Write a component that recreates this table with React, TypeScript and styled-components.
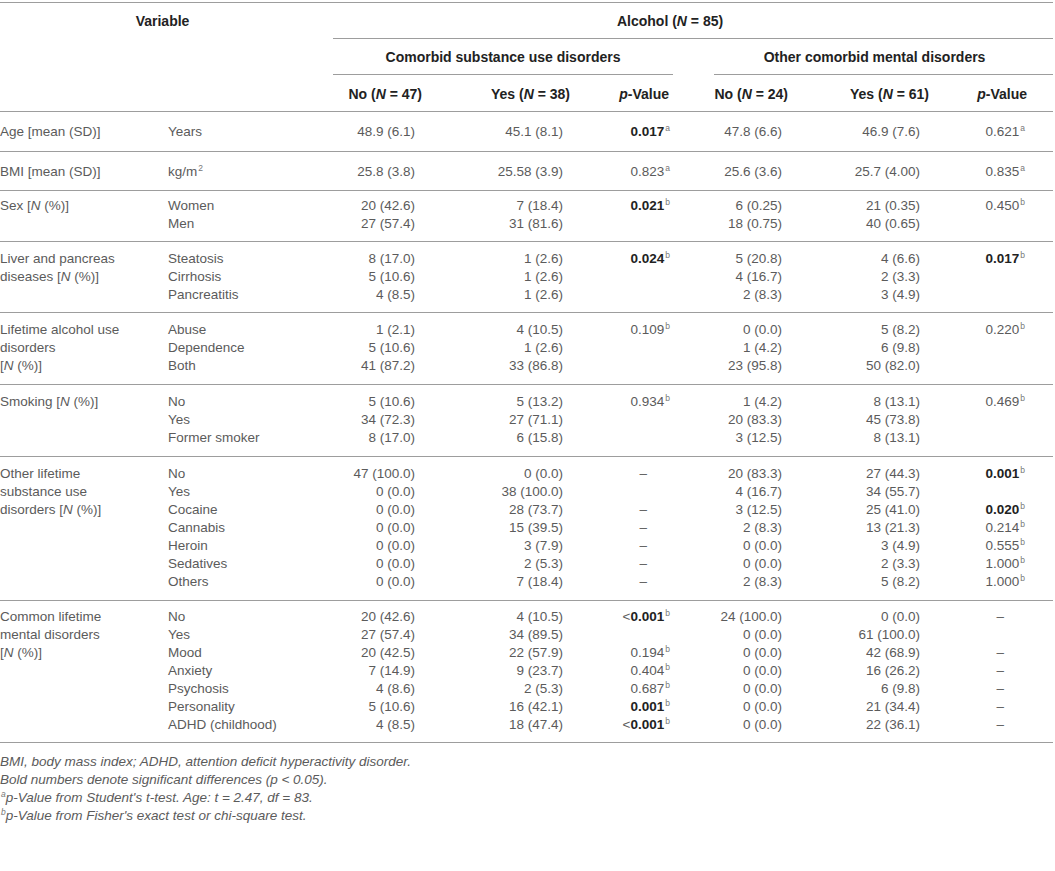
import React from "react";
import styled, { createGlobalStyle } from "styled-components";

const Global = createGlobalStyle`
  html, body { margin: 0; padding: 0; background: #fff; }
  body { font-family: "Liberation Sans", Arial, sans-serif; }
`;

const Page = styled.div`
  width: 1055px;
  padding-top: 2px;
`;

const Table = styled.table`
  width: 1053px;
  table-layout: fixed;
  border-collapse: collapse;
  border-top: 1px solid #9d9d9d;
  font-size: 13.5px;
  color: #5b5b5b;
`;

const Head = styled.th<{ $pr?: number; $pt?: number; $pb?: number; $align?: string }>`
  font-weight: bold;
  color: #222;
  font-size: 14px;
  line-height: 18px;
  text-align: ${(p) => p.$align ?? "right"};
  vertical-align: top;
  padding: ${(p) => p.$pt ?? 9}px ${(p) => p.$pr ?? 0}px ${(p) => p.$pb ?? 8}px 0;
  white-space: nowrap;
`;

const AlcoholHead = styled(Head)`
  border-bottom: 1px solid #9d9d9d;
`;

const ColHead = styled(Head)`
  border-bottom: 1px solid #9d9d9d;
`;

const GroupCell = styled.th`
  padding: 0;
  vertical-align: bottom;
`;

const GroupTitle = styled.div<{ $ml?: number; $pr?: number }>`
  margin-left: ${(p) => p.$ml ?? 0}px;
  padding: 9px ${(p) => p.$pr ?? 0}px 8px 0;
  border-bottom: 1px solid #9d9d9d;
  font-weight: bold;
  color: #222;
  font-size: 14px;
  line-height: 18px;
  text-align: center;
  white-space: nowrap;
`;

const Row = styled.tr`
  border-bottom: 1px solid #9d9d9d;
`;

const Cell = styled.td<{ $pr?: number; $pt: number; $pb: number; $align?: string }>`
  vertical-align: top;
  padding: ${(p) => p.$pt}px ${(p) => p.$pr ?? 0}px ${(p) => p.$pb}px 0;
  text-align: ${(p) => p.$align ?? "right"};
  white-space: nowrap;
`;

const Line = styled.div<{ $extra?: number }>`
  height: 18px;
  line-height: 18px;
  padding-right: ${(p) => p.$extra ?? 0}px;
`;

const Strong = styled.span`
  font-weight: bold;
  color: #222;
`;

const Sup = styled.span`
  position: relative;
  top: -5px;
  font-size: 8.5px;
  line-height: 0;
  margin-left: 1px;
  color: #777;
`;

const Note = styled.div`
  font-style: italic;
  font-size: 13.5px;
  line-height: 18px;
  color: #5b5b5b;
`;

const Notes = styled.div`
  padding-top: 10px;
`;

type P = { v: string; s: string; b?: boolean; lt?: boolean };
type V = string | P;

const p = (v: string, s: string, b = false, lt = false): P => ({ v, s, b, lt });

const N = () => <i>N</i>;
const NPct = () => (
  <>
    [<i>N</i> (%)]
  </>
);

type Group = {
  label: React.ReactNode[];
  sub: React.ReactNode[];
  c3: V[];
  c4: V[];
  c5: V[];
  c6: V[];
  c7: V[];
  c8: V[];
  pt: number;
  pb: number;
};

const groups: Group[] = [
  {
    label: ["Age [mean (SD)]"],
    sub: ["Years"],
    c3: ["48.9 (6.1)"],
    c4: ["45.1 (8.1)"],
    c5: [p("0.017", "a", true)],
    c6: ["47.8 (6.6)"],
    c7: ["46.9 (7.6)"],
    c8: [p("0.621", "a")],
    pt: 11,
    pb: 10,
  },
  {
    label: ["BMI [mean (SD)]"],
    sub: [
      <>
        kg/m<Sup>2</Sup>
      </>,
    ],
    c3: ["25.8 (3.8)"],
    c4: ["25.58 (3.9)"],
    c5: [p("0.823", "a")],
    c6: ["25.6 (3.6)"],
    c7: ["25.7 (4.00)"],
    c8: [p("0.835", "a")],
    pt: 11,
    pb: 9,
  },
  {
    label: [
      <>
        Sex <NPct />
      </>,
    ],
    sub: ["Women", "Men"],
    c3: ["20 (42.6)", "27 (57.4)"],
    c4: ["7 (18.4)", "31 (81.6)"],
    c5: [p("0.021", "b", true)],
    c6: ["6 (0.25)", "18 (0.75)"],
    c7: ["21 (0.35)", "40 (0.65)"],
    c8: [p("0.450", "b")],
    pt: 6,
    pb: 8,
  },
  {
    label: [
      "Liver and pancreas",
      <>
        diseases <NPct />
      </>,
    ],
    sub: ["Steatosis", "Cirrhosis", "Pancreatitis"],
    c3: ["8 (17.0)", "5 (10.6)", "4 (8.5)"],
    c4: ["1 (2.6)", "1 (2.6)", "1 (2.6)"],
    c5: [p("0.024", "b", true)],
    c6: ["5 (20.8)", "4 (16.7)", "2 (8.3)"],
    c7: ["4 (6.6)", "2 (3.3)", "3 (4.9)"],
    c8: [p("0.017", "b", true)],
    pt: 8,
    pb: 8,
  },
  {
    label: ["Lifetime alcohol use", "disorders", <NPct />],
    sub: ["Abuse", "Dependence", "Both"],
    c3: ["1 (2.1)", "5 (10.6)", "41 (87.2)"],
    c4: ["4 (10.5)", "1 (2.6)", "33 (86.8)"],
    c5: [p("0.109", "b")],
    c6: ["0 (0.0)", "1 (4.2)", "23 (95.8)"],
    c7: ["5 (8.2)", "6 (9.8)", "50 (82.0)"],
    c8: [p("0.220", "b")],
    pt: 8,
    pb: 9,
  },
  {
    label: [
      <>
        Smoking <NPct />
      </>,
    ],
    sub: ["No", "Yes", "Former smoker"],
    c3: ["5 (10.6)", "34 (72.3)", "8 (17.0)"],
    c4: ["5 (13.2)", "27 (71.1)", "6 (15.8)"],
    c5: [p("0.934", "b")],
    c6: ["1 (4.2)", "20 (83.3)", "3 (12.5)"],
    c7: ["8 (13.1)", "45 (73.8)", "8 (13.1)"],
    c8: [p("0.469", "b")],
    pt: 8,
    pb: 9,
  },
  {
    label: [
      "Other lifetime",
      "substance use",
      <>
        disorders <NPct />
      </>,
    ],
    sub: ["No", "Yes", "Cocaine", "Cannabis", "Heroin", "Sedatives", "Others"],
    c3: ["47 (100.0)", "0 (0.0)", "0 (0.0)", "0 (0.0)", "0 (0.0)", "0 (0.0)", "0 (0.0)"],
    c4: ["0 (0.0)", "38 (100.0)", "28 (73.7)", "15 (39.5)", "3 (7.9)", "2 (5.3)", "7 (18.4)"],
    c5: ["–", "", "–", "–", "–", "–", "–"],
    c6: ["20 (83.3)", "4 (16.7)", "3 (12.5)", "2 (8.3)", "0 (0.0)", "0 (0.0)", "2 (8.3)"],
    c7: ["27 (44.3)", "34 (55.7)", "25 (41.0)", "13 (21.3)", "3 (4.9)", "2 (3.3)", "5 (8.2)"],
    c8: [
      p("0.001", "b", true),
      "",
      p("0.020", "b", true),
      p("0.214", "b"),
      p("0.555", "b"),
      p("1.000", "b"),
      p("1.000", "b"),
    ],
    pt: 8,
    pb: 9,
  },
  {
    label: ["Common lifetime", "mental disorders", <NPct />],
    sub: ["No", "Yes", "Mood", "Anxiety", "Psychosis", "Personality", "ADHD (childhood)"],
    c3: ["20 (42.6)", "27 (57.4)", "20 (42.5)", "7 (14.9)", "4 (8.6)", "5 (10.6)", "4 (8.5)"],
    c4: ["4 (10.5)", "34 (89.5)", "22 (57.9)", "9 (23.7)", "2 (5.3)", "16 (42.1)", "18 (47.4)"],
    c5: [
      p("0.001", "b", true, true),
      "",
      p("0.194", "b"),
      p("0.404", "b"),
      p("0.687", "b"),
      p("0.001", "b", true),
      p("0.001", "b", true, true),
    ],
    c6: ["24 (100.0)", "0 (0.0)", "0 (0.0)", "0 (0.0)", "0 (0.0)", "0 (0.0)", "0 (0.0)"],
    c7: ["0 (0.0)", "61 (100.0)", "42 (68.9)", "16 (26.2)", "6 (9.8)", "21 (34.4)", "22 (36.1)"],
    c8: ["–", "", "–", "–", "–", "–", "–"],
    pt: 7,
    pb: 8,
  },
];

const cols: { key: "c3" | "c4" | "c5" | "c6" | "c7" | "c8"; pr: number; dash: number }[] = [
  { key: "c3", pr: 8, dash: 0 },
  { key: "c4", pr: 9, dash: 0 },
  { key: "c5", pr: 3, dash: 23 },
  { key: "c6", pr: 8, dash: 0 },
  { key: "c7", pr: 11, dash: 0 },
  { key: "c8", pr: 28, dash: 21 },
];

const renderValue = (v: V) => {
  if (typeof v === "string") return v === "" ? "\u00a0" : v;
  const num = v.b ? <Strong>{v.v}</Strong> : v.v;
  return (
    <>
      {v.lt ? "<" : null}
      {num}
      <Sup>{v.s}</Sup>
    </>
  );
};

export default function App() {
  return (
    <Page>
      <Global />
      <Table>
        <colgroup>
          <col style={{ width: 168 }} />
          <col style={{ width: 165 }} />
          <col style={{ width: 90 }} />
          <col style={{ width: 149 }} />
          <col style={{ width: 101 }} />
          <col style={{ width: 117 }} />
          <col style={{ width: 141 }} />
          <col style={{ width: 122 }} />
        </colgroup>
        <thead>
          <tr>
            <ColHead colSpan={2} rowSpan={3} $align="center" $pr={8}>
              Variable
            </ColHead>
            <AlcoholHead colSpan={6} $align="center" $pr={46}>
              Alcohol (<N /> = 85)
            </AlcoholHead>
          </tr>
          <tr>
            <GroupCell colSpan={3}>
              <GroupTitle $pr={0}>Comorbid substance use disorders</GroupTitle>
            </GroupCell>
            <GroupCell colSpan={3}>
              <GroupTitle $ml={41} $pr={18}>
                Other comorbid mental disorders
              </GroupTitle>
            </GroupCell>
          </tr>
          <tr>
            <ColHead $pt={10} $pr={1}>
              No (<N /> = 47)
            </ColHead>
            <ColHead $pt={10} $pr={2}>
              Yes (<N /> = 38)
            </ColHead>
            <ColHead $pt={10} $pr={4}>
              <i>p</i>-Value
            </ColHead>
            <ColHead $pt={10} $pr={2}>
              No (<N /> = 24)
            </ColHead>
            <ColHead $pt={10} $pr={2}>
              Yes (<N /> = 61)
            </ColHead>
            <ColHead $pt={10} $pr={26}>
              <i>p</i>-Value
            </ColHead>
          </tr>
        </thead>
        <tbody>
          {groups.map((g, gi) => (
            <Row key={gi}>
              <Cell $pt={g.pt} $pb={g.pb} $align="left">
                {g.label.map((l, i) => (
                  <Line key={i}>{l}</Line>
                ))}
              </Cell>
              <Cell $pt={g.pt} $pb={g.pb} $align="left">
                {g.sub.map((l, i) => (
                  <Line key={i}>{l}</Line>
                ))}
              </Cell>
              {cols.map((c) => (
                <Cell key={c.key} $pt={g.pt} $pb={g.pb} $pr={c.pr}>
                  {g[c.key].map((v, i) => (
                    <Line key={i} $extra={v === "–" ? c.dash : 0}>
                      {renderValue(v)}
                    </Line>
                  ))}
                </Cell>
              ))}
            </Row>
          ))}
        </tbody>
      </Table>
      <Notes>
        <Note>BMI, body mass index; ADHD, attention deficit hyperactivity disorder.</Note>
        <Note>Bold numbers denote significant differences (p &lt; 0.05).</Note>
        <Note>
          <Sup>a</Sup>p-Value from Student's t-test. Age: t = 2.47, df = 83.
        </Note>
        <Note>
          <Sup>b</Sup>p-Value from Fisher's exact test or chi-square test.
        </Note>
      </Notes>
    </Page>
  );
}
